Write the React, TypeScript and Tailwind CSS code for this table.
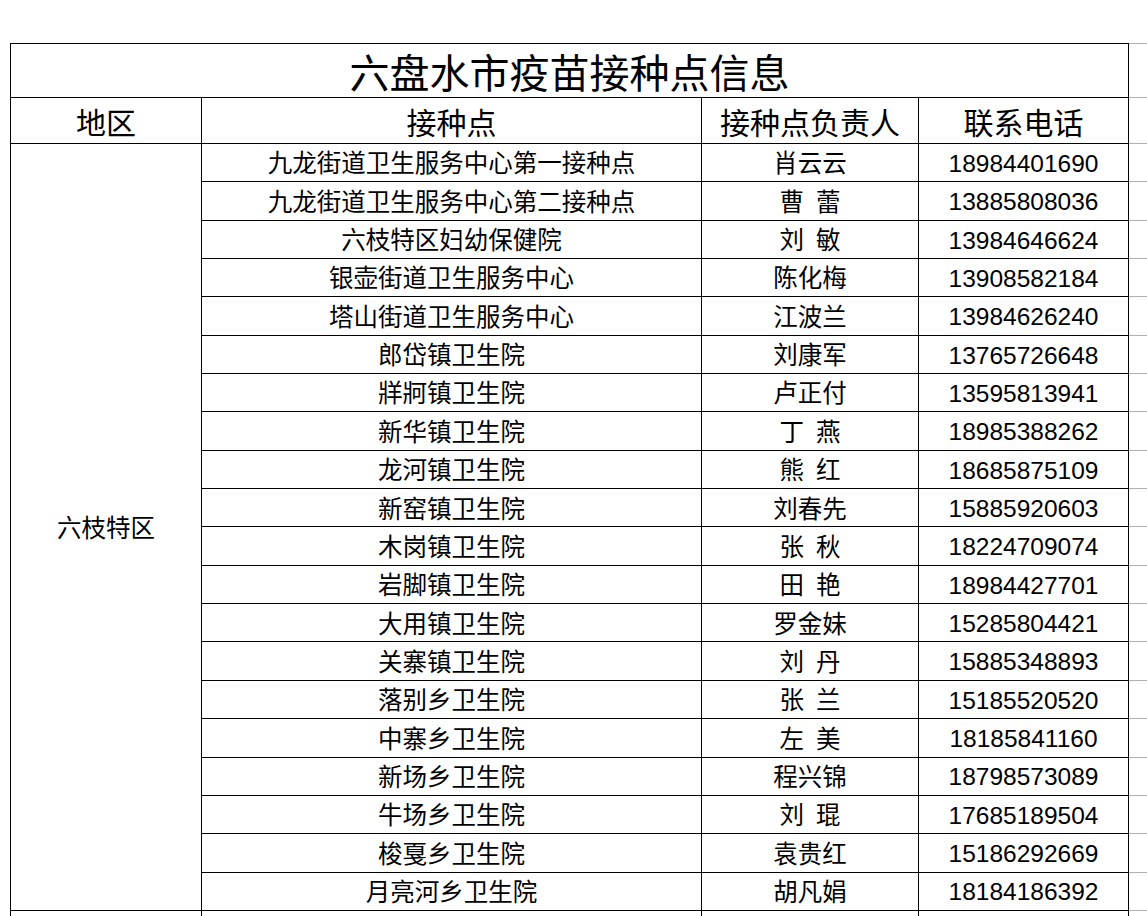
const rows: [string, string, string][] = [
  ["九龙街道卫生服务中心第一接种点", "肖云云", "18984401690"],
  ["九龙街道卫生服务中心第二接种点", "曹\u2002蕾", "13885808036"],
  ["六枝特区妇幼保健院", "刘\u2002敏", "13984646624"],
  ["银壶街道卫生服务中心", "陈化梅", "13908582184"],
  ["塔山街道卫生服务中心", "江波兰", "13984626240"],
  ["郎岱镇卫生院", "刘康军", "13765726648"],
  ["牂牁镇卫生院", "卢正付", "13595813941"],
  ["新华镇卫生院", "丁\u2002燕", "18985388262"],
  ["龙河镇卫生院", "熊\u2002红", "18685875109"],
  ["新窑镇卫生院", "刘春先", "15885920603"],
  ["木岗镇卫生院", "张\u2002秋", "18224709074"],
  ["岩脚镇卫生院", "田\u2002艳", "18984427701"],
  ["大用镇卫生院", "罗金妹", "15285804421"],
  ["关寨镇卫生院", "刘\u2002丹", "15885348893"],
  ["落别乡卫生院", "张\u2002兰", "15185520520"],
  ["中寨乡卫生院", "左\u2002美", "18185841160"],
  ["新场乡卫生院", "程兴锦", "18798573089"],
  ["牛场乡卫生院", "刘\u2002琨", "17685189504"],
  ["梭戛乡卫生院", "袁贵红", "15186292669"],
  ["月亮河乡卫生院", "胡凡娟", "18184186392"],
];

const cjk = "font-['Noto_Sans_CJK_SC','Noto_Sans',sans-serif]";
const cell = "border border-black p-0 text-center align-middle";
const extra = "border-y border-[#b0b0b0] border-l-black p-0";

export default function App() {
  return (
    <div className={`h-[916px] w-[1147px] overflow-hidden bg-white pl-[10px] pt-[43px] text-black ${cjk}`}>
      <table className="w-[1158px] max-w-none table-fixed border-collapse">
        <colgroup>
          <col className="w-[191px]" />
          <col className="w-[500px]" />
          <col className="w-[217px]" />
          <col className="w-[210px]" />
          <col className="w-[40px]" />
        </colgroup>
        <tbody>
          <tr className="h-[54px]">
            <td colSpan={4} className={`${cell} text-[40px] leading-none`}>
              六盘水市疫苗接种点信息
            </td>
            <td className={extra} />
          </tr>
          <tr className="h-[46px]">
            <td className={`${cell} text-[30px] leading-none`}>地区</td>
            <td className={`${cell} text-[30px] leading-none`}>接种点</td>
            <td className={`${cell} text-[30px] leading-none`}>接种点负责人</td>
            <td className={`${cell} text-[30px] leading-none`}>联系电话</td>
            <td className={extra} />
          </tr>
          {rows.map(([site, person, phone], i) => (
            <tr key={site} className="h-[38.35px]">
              {i === 0 && (
                <td rowSpan={rows.length} className={`${cell} text-[24.5px] leading-none`}>
                  六枝特区
                </td>
              )}
              <td className={`${cell} text-[24.5px] leading-none`}>{site}</td>
              <td className={`${cell} text-[24.5px] leading-none`}>{person}</td>
              <td className={`${cell} pt-[3px] font-['Liberation_Sans',Arial,sans-serif] text-[24.5px] leading-none`}>
                {phone}
              </td>
              <td className={extra} />
            </tr>
          ))}
          <tr className="h-[38px]">
            <td className={cell} />
            <td className={cell} />
            <td className={cell} />
            <td className={cell} />
            <td className={extra} />
          </tr>
        </tbody>
      </table>
    </div>
  );
}
